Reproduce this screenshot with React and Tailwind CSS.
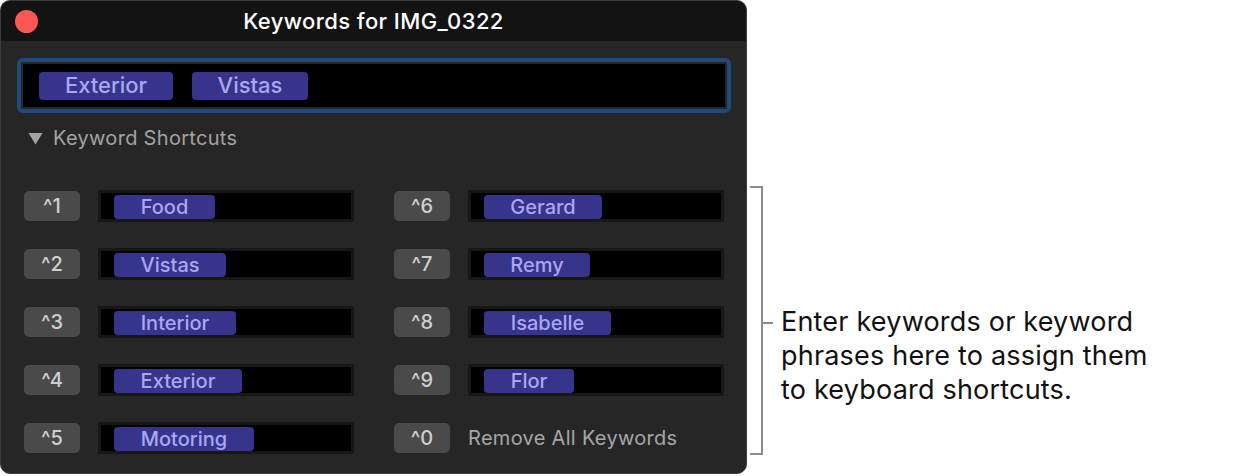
const sans = { fontFamily: 'Inter, "Noto Sans", sans-serif' };

const left = [
  { key: '^1', word: 'Food', w: 'w-[101px]' },
  { key: '^2', word: 'Vistas', w: 'w-[112px]' },
  { key: '^3', word: 'Interior', w: 'w-[122px]' },
  { key: '^4', word: 'Exterior', w: 'w-[128px]' },
  { key: '^5', word: 'Motoring', w: 'w-[140px]' },
];

const right = [
  { key: '^6', word: 'Gerard', w: 'w-[118px]' },
  { key: '^7', word: 'Remy', w: 'w-[106px]' },
  { key: '^8', word: 'Isabelle', w: 'w-[127px]' },
  { key: '^9', word: 'Flor', w: 'w-[90px]' },
  { key: '^0', word: null },
];

function Token({ children, className = '' }) {
  return (
    <span
      className={`flex items-center justify-center rounded-[4px] bg-[#37348b] font-medium text-[#a9a7f4] ${className}`}
    >
      {children}
    </span>
  );
}

function ShortcutRow({ keyLabel, word, w }) {
  return (
    <div className="flex h-[32px] items-center gap-[18px]">
      <div className="flex h-[30px] w-[56px] items-center justify-center rounded-[5px] bg-[#4a4a4a] text-[20px] font-medium text-[#cfcfcf]">
        {keyLabel}
      </div>
      {word ? (
        <div className="flex h-[32px] w-[256px] items-end border-[3px] border-[#171717] bg-black pl-[13px]">
          <Token className={`h-[24px] text-[20px] ${w}`}>{word}</Token>
        </div>
      ) : (
        <span className="text-[20px] tracking-[0.3px] text-[#a6a6a6]">Remove All Keywords</span>
      )}
    </div>
  );
}

export default function App() {
  return (
    <div className="flex h-[476px] w-[1254px] bg-white" style={sans}>
      <div className="flex h-[474px] w-[747px] flex-col overflow-hidden rounded-[10px] border border-[#3c3c3c] bg-[#262626]">
        <div className="relative flex h-[40px] shrink-0 items-center justify-center bg-[#131313]">
          <span className="absolute left-[14px] top-[9px] h-[23px] w-[23px] rounded-full bg-[#fc5753]" />
          <span className="text-[22px] font-medium tracking-[0.4px] text-white">Keywords for IMG_0322</span>
        </div>

        <div className="ml-[16px] mt-[17px] w-[714px] rounded-[6px] border-[4px] border-[#1f4a80]">
          <div className="flex h-[47px] items-center gap-[19px] border-[2px] border-[#262626] bg-black pl-[16px]">
            <Token className="h-[28px] w-[134px] text-[22px]">Exterior</Token>
            <Token className="h-[28px] w-[116px] text-[22px]">Vistas</Token>
          </div>
        </div>

        <div className="ml-[27px] mt-[10px] flex items-center gap-[10px] text-[#a3a3a3]">
          <svg width="15" height="13" viewBox="0 0 15 13">
            <path d="M0.5 1h14L7.5 12.5z" fill="#a3a3a3" />
          </svg>
          <span className="text-[20px] tracking-[0.3px]">Keyword Shortcuts</span>
        </div>

        <div className="ml-[23px] mt-[37px] flex gap-[40px]">
          <div className="flex flex-col gap-[26px]">
            {left.map((r) => (
              <ShortcutRow key={r.key} keyLabel={r.key} word={r.word} w={r.w} />
            ))}
          </div>
          <div className="flex flex-col gap-[26px]">
            {right.map((r) => (
              <ShortcutRow key={r.key} keyLabel={r.key} word={r.word} w={r.w} />
            ))}
          </div>
        </div>
      </div>

      {/* callout bracket + note */}
      <div className="ml-[3px] mt-[186px] flex h-[269px] items-start">
        <div className="relative h-full w-[13px] border-y-2 border-r-2 border-[#8c8c8c]">
          <span className="absolute left-[11px] top-[134px] h-[2px] w-[12px] bg-[#8c8c8c]" />
        </div>
        <p className="ml-[18px] mt-[119px] text-[27px] leading-[34px] tracking-[0.2px] text-[#111]">
          Enter keywords or keyword
          <br />
          phrases here to assign them
          <br />
          to keyboard shortcuts.
        </p>
      </div>
    </div>
  );
}
